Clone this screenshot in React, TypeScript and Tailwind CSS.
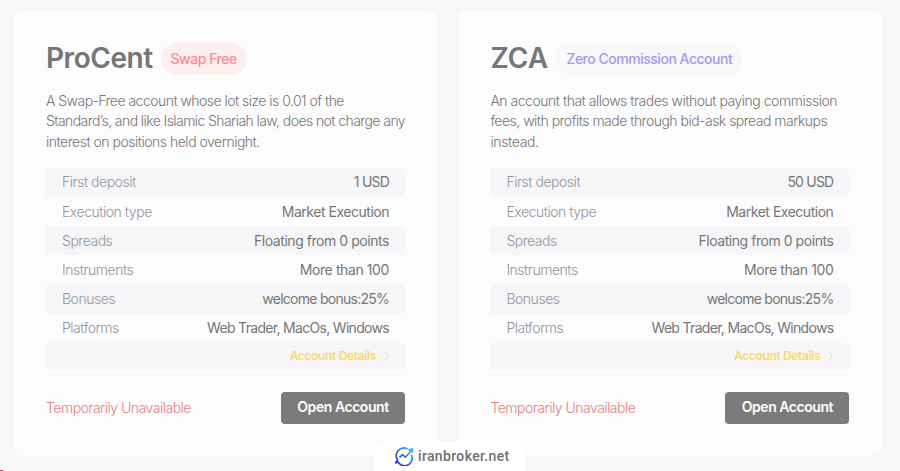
const ACCOUNTS = [
  {
    name: "ProCent",
    nameClass: "tracking-[-0.45px]",
    tag: "Swap Free",
    tagClass: "bg-[#fdefef] text-[#ff8b8b] w-[86px] tracking-[-0.45px]",
    lines: [
      { text: "A Swap-Free account whose lot size is 0.01 of the", className: "tracking-[-0.53px]" },
      { text: "Standard’s, and like Islamic Shariah law, does not charge any", className: "tracking-[-0.58px]" },
      { text: "interest on positions held overnight.", className: "tracking-[-0.49px]" },
    ],
    deposit: "1 USD",
  },
  {
    name: "ZCA",
    nameClass: "tracking-[0.1px]",
    tag: "Zero Commission Account",
    tagClass: "bg-[#f8f8f9] text-[#a596fb] w-[186px] tracking-[-0.48px]",
    lines: [
      { text: "An account that allows trades without paying commission", className: "tracking-[-0.48px]" },
      { text: "fees, with profits made through bid-ask spread markups", className: "tracking-[-0.51px]" },
      { text: "instead.", className: "tracking-[-0.35px]" },
    ],
    deposit: "50 USD",
  },
];

const ROWS = [
  { label: "Execution type", value: "Market Execution", valueClass: "tracking-[-0.48px]" },
  { label: "Spreads", value: "Floating from 0 points", valueClass: "tracking-[-0.45px]" },
  { label: "Instruments", value: "More than 100", valueClass: "tracking-[-0.4px]" },
  { label: "Bonuses", value: "welcome bonus:25%", valueClass: "tracking-[-0.74px]" },
  { label: "Platforms", value: "Web Trader, MacOs, Windows", valueClass: "tracking-[-0.69px]" },
];

type Account = (typeof ACCOUNTS)[number];

function AccountCard({ account }: { account: Account }) {
  const rows = [
    { label: "First deposit", value: account.deposit, valueClass: "tracking-[-0.8px]" },
    ...ROWS,
  ];

  return (
    <section className="h-[446px] w-[425px] rounded-[10px] bg-[#fcfcfc] px-[33px] pt-[33px]">
      <header className="flex h-8 items-center gap-2">
        <h2
          className={`pb-0.5 text-[28px] leading-8 font-semibold text-[#767676] ${account.nameClass}`}
        >
          {account.name}
        </h2>
        <span
          className={`flex h-8 items-center justify-center rounded-full pb-0.5 text-[14px] font-medium whitespace-nowrap ${account.tagClass}`}
        >
          {account.tag}
        </span>
      </header>

      <div className="mt-4 text-[14px] leading-[20.3px] font-light whitespace-nowrap text-[#767676]">
        {account.lines.map((line) => (
          <p key={line.text} className={line.className}>
            {line.text}
          </p>
        ))}
      </div>

      <dl className="mt-4">
        {rows.map((row) => (
          <div
            key={row.label}
            className="flex h-[29.15px] items-center justify-between rounded px-4 pb-[1.2px] text-[14px] odd:bg-[#f6f6f8]"
          >
            <dt className="font-light tracking-[-0.47px] text-[#92959b]">{row.label}</dt>
            <dd className={`text-[#767676] ${row.valueClass}`}>{row.value}</dd>
          </div>
        ))}
      </dl>
      <a className="flex h-[26.1px] items-center justify-end gap-2 rounded bg-[#f6f6f8] pr-4 text-[12px] font-semibold tracking-[-0.35px] text-[#f6da6c]">
        Account Details
        <svg width="5" height="9" viewBox="0 0 5 9" fill="none" stroke="currentColor">
          <path d="m0.5 0.5 4 4-4 4" />
        </svg>
      </a>

      <footer className="mt-[5px] flex items-center justify-between border-t-2 border-[#f7f7f7] pt-4">
        <span className="text-[14px] font-light tracking-[-0.5px] text-[#e97f7f]">
          Temporarily Unavailable
        </span>
        <button className="h-8 w-[124px] rounded bg-[#7b7b7b] pb-0.5 text-[14px] font-semibold tracking-[-0.45px] text-white">
          Open Account
        </button>
      </footer>
    </section>
  );
}

function Logo() {
  return (
    <svg width="20" height="20" viewBox="0 0 20 20" fill="none">
      <defs>
        <linearGradient id="logo" x1="3" y1="18" x2="17" y2="2" gradientUnits="userSpaceOnUse">
          <stop stopColor="#3b22f4" />
          <stop offset="0.5" stopColor="#2a6bf8" />
          <stop offset="1" stopColor="#18c3f4" />
        </linearGradient>
      </defs>
      <path
        d="M13.6 3A7.6 7.6 0 0 0 3.4 13.6L1.8 17M3.6 15.4A7.6 7.6 0 0 0 17.4 8.8"
        stroke="url(#logo)"
        strokeWidth="1.6"
      />
      <path d="m5.6 11.4 2.8-2.8 3 2.6 5-5.4" stroke="url(#logo)" strokeWidth="1.6" />
      <path d="M14.4 3.4 19 2.4 18.4 7Z" fill="#18b4f4" stroke="#18b4f4" strokeWidth="0.6" />
      <path d="M0.8 18 2.2 14.6l2.4 2.2Z" fill="#3b22f4" />
    </svg>
  );
}

export default function App() {
  return (
    <div className="relative h-[471px] w-[900px] overflow-hidden bg-[#f7f7f7] pt-[10px] pl-[13px] font-['Inter',sans-serif]">
      <main className="flex gap-[19.4px]">
        {ACCOUNTS.map((account) => (
          <AccountCard key={account.name} account={account} />
        ))}
      </main>

      <div className="absolute bottom-0 left-[375px] flex h-[30px] w-[150px] items-center gap-1 rounded-t-[10px] bg-white pl-[19px]">
        <Logo />
        <span className="font-[Roboto,sans-serif] text-[14px] font-medium tracking-[0.35px] text-[#707070]">
          iranbroker.net
        </span>
      </div>
      <div className="absolute bottom-0 left-0 h-px w-[3px] bg-[#b04a6c]" />
    </div>
  );
}
